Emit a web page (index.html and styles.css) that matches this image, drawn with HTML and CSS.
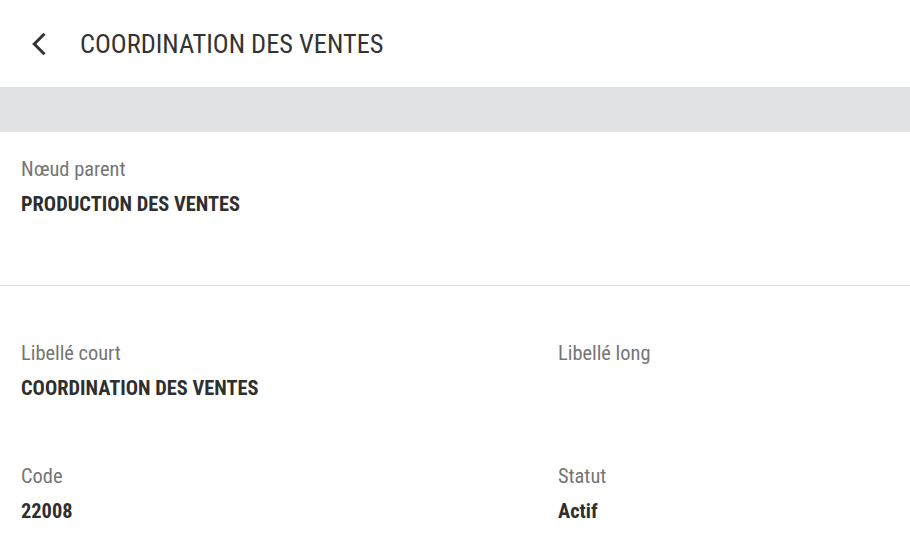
FILE: index.html
```html
<!DOCTYPE html>
<html lang="fr">
<head>
<meta charset="utf-8">
<title>Coordination des ventes</title>
<link rel="stylesheet" href="styles.css">
</head>
<body>
<header class="topbar">
  <button class="back" aria-label="Retour">
    <svg width="16" height="24" viewBox="0 0 16 24"><path d="M13.5 1.8 L3.3 12 L13.5 22.2" fill="none" stroke="#333" stroke-width="3"/></svg>
  </button>
  <h1 class="title">COORDINATION DES VENTES</h1>
</header>
<div class="band"></div>
<section class="section parent">
  <div class="field">
    <div class="label">Nœud parent</div>
    <div class="value">PRODUCTION DES VENTES</div>
  </div>
</section>
<section class="section details">
  <div class="field">
    <div class="label">Libellé court</div>
    <div class="value">COORDINATION DES VENTES</div>
  </div>
  <div class="field">
    <div class="label">Libellé long</div>
    <div class="value"></div>
  </div>
  <div class="field">
    <div class="label">Code</div>
    <div class="value">22008</div>
  </div>
  <div class="field">
    <div class="label">Statut</div>
    <div class="value">Actif</div>
  </div>
</section>
</body>
</html>
```
FILE: styles.css
```css
html, body {
  margin: 0;
  padding: 0;
  background: #fff;
}
body {
  font-family: "Roboto Condensed", "Liberation Sans Narrow", "Roboto", sans-serif;
  font-stretch: condensed;
  color: #333;
  width: 910px;
  height: 551px;
  overflow: hidden;
}
.topbar {
  height: 87px;
  display: flex;
  align-items: center;
}
.back {
  border: 0;
  background: none;
  padding: 0;
  margin: 0 0 -1px 31px;
  width: 16px;
  height: 24px;
  display: flex;
}
.title {
  margin: 0 0 0 33px;
  font-size: 26.4px;
  font-weight: 400;
  color: #333;
  line-height: 30px;
}
.band {
  height: 45px;
  background: #e1e2e4;
}
.section {
  padding: 0 21px;
}
.parent {
  padding-top: 25px;
  padding-bottom: 69px;
  border-bottom: 1px solid #e0e0e0;
}
.details {
  padding-top: 55px;
  display: grid;
  grid-template-columns: 537px 1fr;
  row-gap: 64px;
}
.label {
  font-size: 20.4px;
  line-height: 24px;
  color: #757575;
}
.value {
  margin-top: 11px;
  font-size: 20.4px;
  line-height: 24px;
  font-weight: 700;
  color: #2f2f2f;
  min-height: 24px;
}
```
